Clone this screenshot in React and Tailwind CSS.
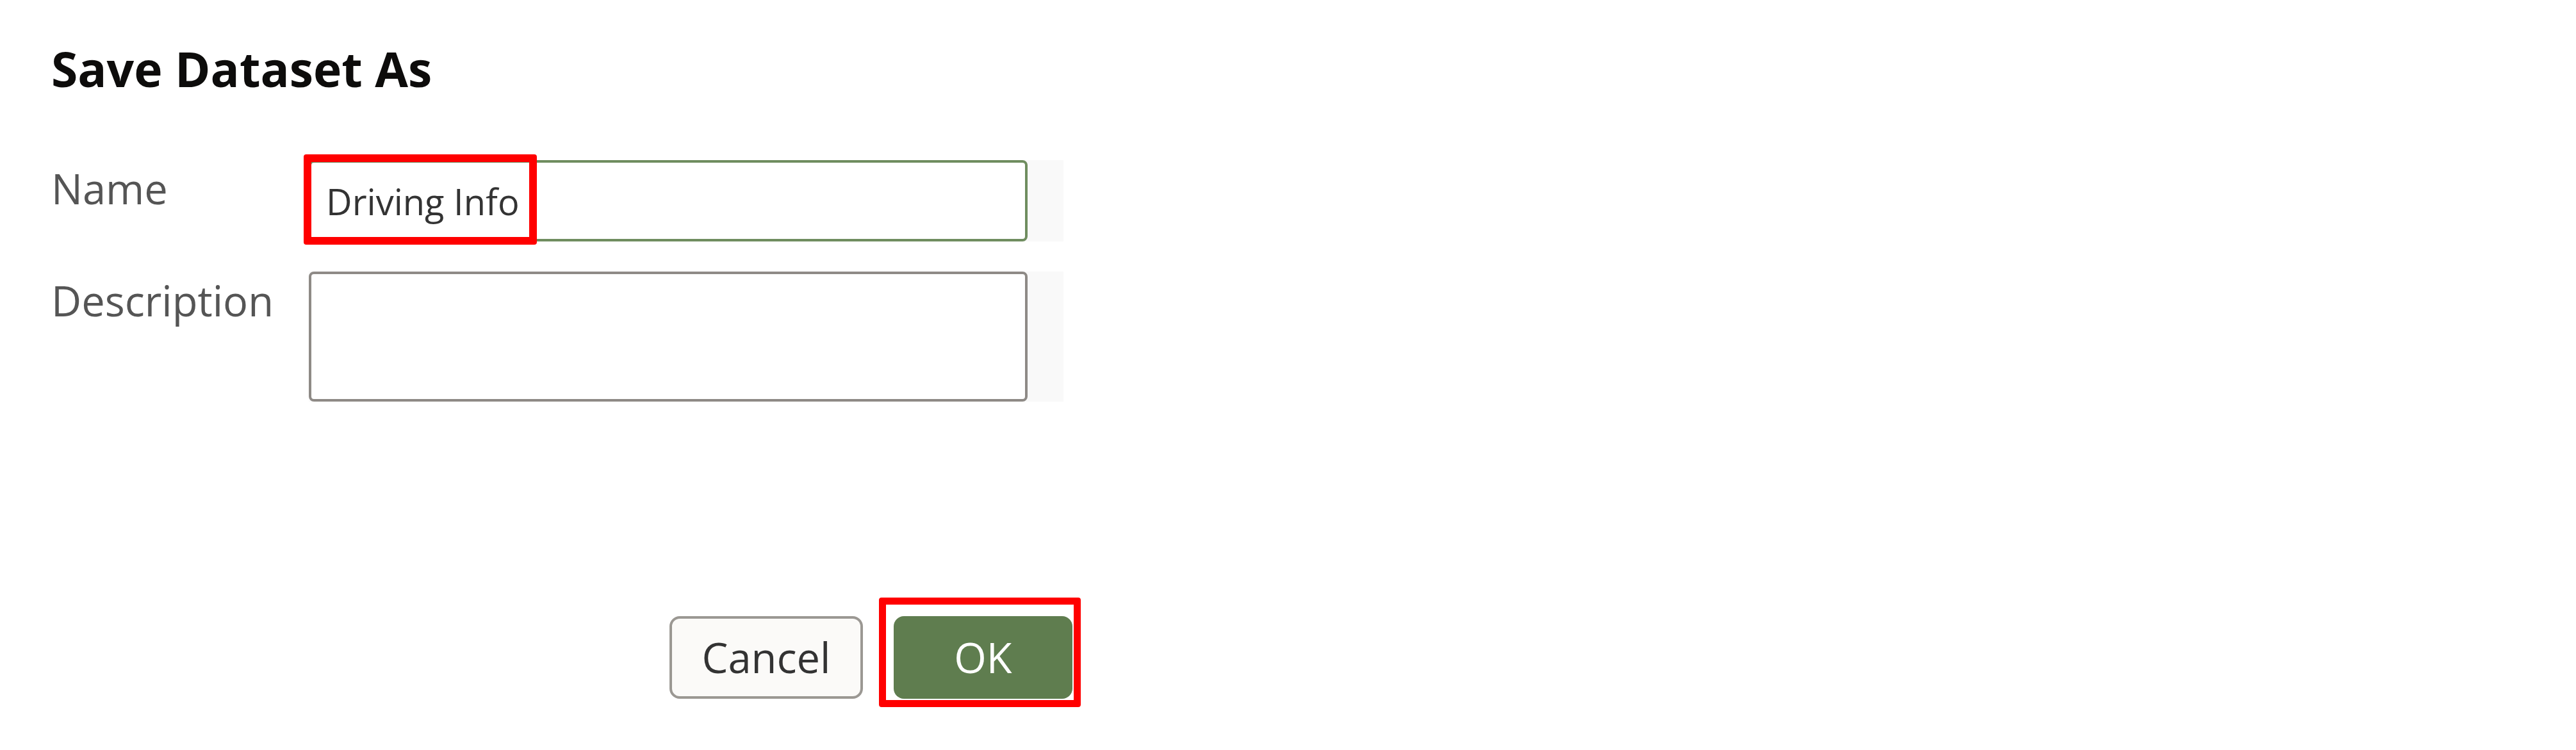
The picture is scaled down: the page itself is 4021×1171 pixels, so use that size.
export default function App() {
  return (
    <div className="w-full h-[1171px] overflow-hidden bg-white font-['Open_Sans',sans-serif]">
      <div className="w-[1674px] pl-[80px] pt-[70px]">
        <h1 className="text-[75px] leading-none font-bold text-[#0d0c0b]">
          Save Dataset As
        </h1>

        {/* form fields */}
        <div className="mt-[105px] grid grid-cols-[402px_auto] gap-y-[47px]">
          <label className="pt-[12px] text-[65px] leading-none text-[#555555]">
            Name
          </label>
          <div className="relative flex w-fit bg-[#f9f9f9] pr-[56px]">
            <input
              type="text"
              readOnly
              value="Driving Info"
              className="w-[1122px] h-[127px] rounded-[8px] border-[4px] border-[#6f8d5f] bg-white pl-[23px] text-[56px] leading-none text-[#333333] outline-none"
            />
            <div className="absolute -left-[8px] -top-[9px] w-[364px] h-[141px] rounded-[4px] border-[12px] border-[#ff0000]"></div>
          </div>

          <label className="pt-[13px] text-[65px] leading-none text-[#555555]">
            Description
          </label>
          <div className="flex w-fit bg-[#f9f9f9] pr-[56px]">
            <textarea
              readOnly
              className="block w-[1122px] h-[203px] resize-none rounded-[8px] border-[4px] border-[#8e8a86] bg-white outline-none"
            ></textarea>
          </div>
        </div>

        {/* buttons */}
        <div className="mt-[335px] flex justify-end gap-[48px]">
          <button className="w-[302px] h-[129px] rounded-[16px] border-[4px] border-[#9b9893] bg-[#fbfaf8] text-[65px] leading-none text-[#333333]">
            Cancel
          </button>
          <div className="relative">
            <button className="w-[279px] h-[129px] rounded-[16px] bg-[#5f7d4f] text-[65px] leading-none text-white">
              OK
            </button>
            <div className="absolute -left-[23px] -top-[29px] w-[315px] h-[171px] rounded-[4px] border-[11px] border-[#ff0000]"></div>
          </div>
        </div>
      </div>
    </div>
  );
}
